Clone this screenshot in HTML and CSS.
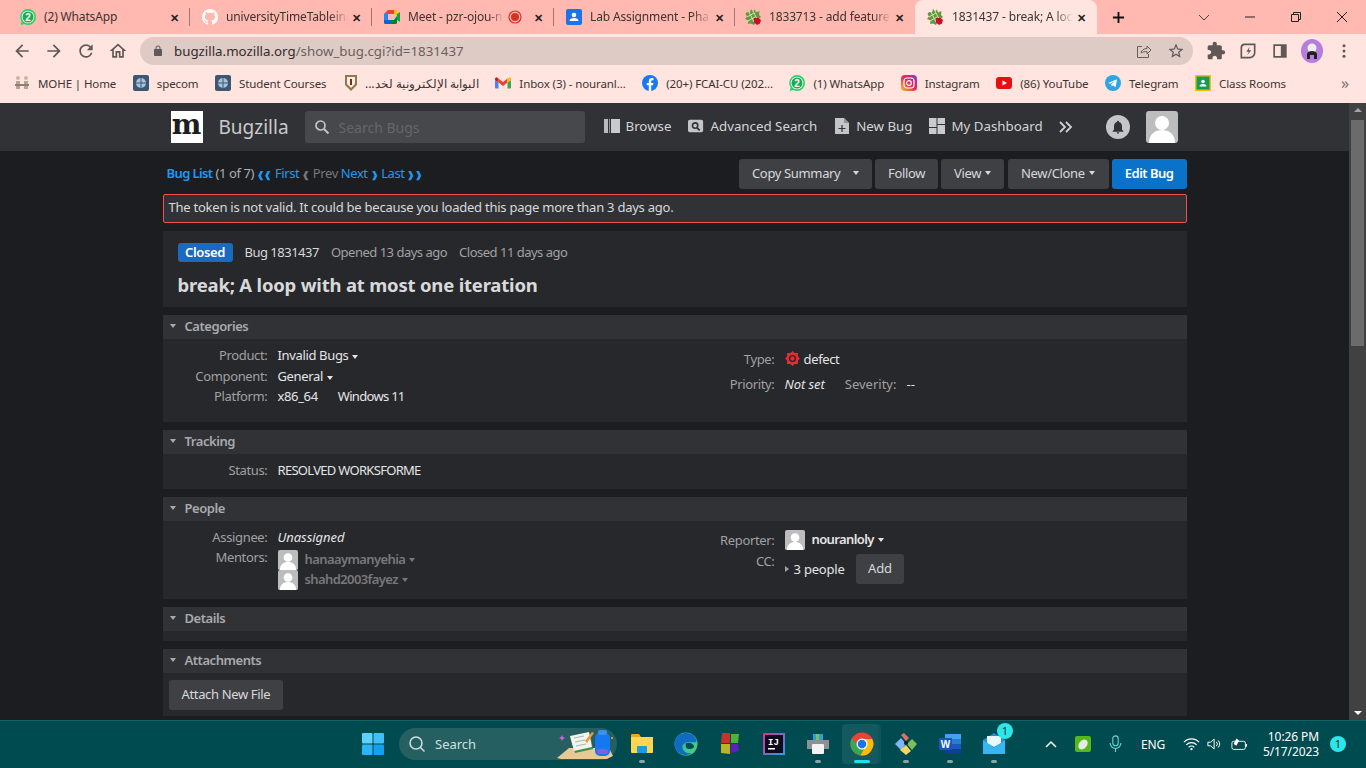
FILE: index.html
```html
<!DOCTYPE html>
<html lang="en">
<head>
    <meta charset="UTF-8">
    <meta name="viewport" content="width=device-width, initial-scale=1.0">
    <title>1831437 - break; A loop with at most one iteration</title>
    <link rel="stylesheet" href="styles.css">
</head>
<body>
    <svg class="defs" width="0" height="0">
        <symbol id="i-wa" viewBox="0 0 16 16">
            <path fill="#25d366" d="M8 0a8 8 0 0 1 0 16 8 8 0 0 1-3.600-.9L.6 16l1-3.600A8 8 0 0 1 8 0z"/>
            <circle cx="8" cy="8" r="6.300" fill="#fff"/>
            <circle cx="8" cy="8" r="5.500" fill="#1fa855"/>
        </symbol>
        <symbol id="i-bug" viewBox="0 0 16 16">
            <path fill="#5f9a3c" d="M2 3l3 .5L6 0l2 2.500L10 .5l1 3L14.500 2 14 6l2 2-2.500 2 .5 3-3.500.5-1.500 2.500-3-1.500-3 .5.500-3.500L0 10l2-2.500L.5 5z"/>
            <path stroke="#cfe2b4" stroke-width="1" d="M4 3l5 10M8 2l4 8M2 8l7-4M3 12l7-4"/>
            <path fill="#c8102e" d="M9 9h4.500l2.500 2-1 3.500-3 1.500-3-2.500z"/>
        </symbol>
        <symbol id="i-avatar" viewBox="0 0 32 32">
            <rect width="32" height="32" rx="3" fill="#bdbdbd"/>
            <circle cx="16" cy="12" r="7" fill="#fff"/>
            <path fill="#fff" d="M3 32c0-9 6-13 13-13s13 4 13 13z"/>
        </symbol>
        <symbol id="i-win" viewBox="0 0 24 24">
            <rect x="1" y="1" width="10.500" height="10.500" rx="1" fill="#5fd0ff"/>
            <rect x="12.500" y="1" width="10.500" height="10.500" rx="1" fill="#3fc0fb"/>
            <rect x="1" y="12.500" width="10.500" height="10.500" rx="1" fill="#2eb3f7"/>
            <rect x="12.500" y="12.500" width="10.500" height="10.500" rx="1" fill="#14a0f0"/>
        </symbol>
    </svg>

    <div class="tabstrip">
        <div class="tab">
            <svg class="favicon" viewBox="0 0 16 16"><use href="#i-wa"/><text class="wa-text" x="8" y="11.500">2</text></svg>
            <span class="tab-title tab-title-plain">(2) WhatsApp</span>
            <span class="tab-close">✕</span>
        </div>
        <div class="tab">
            <svg class="favicon" viewBox="0 0 16 16"><path fill="#fff" d="M8 0C3.580 0 0 3.580 0 8c0 3.540 2.290 6.530 5.470 7.590.4.07.55-.17.55-.38 0-.19-.01-.82-.01-1.490-2.010.37-2.530-.49-2.690-.94-.09-.23-.48-.94-.82-1.130-.28-.15-.68-.52-.01-.53.63-.01 1.080.58 1.230.82.72 1.210 1.870.87 2.330.66.07-.52.28-.87.51-1.070-1.780-.2-3.640-.89-3.640-3.950 0-.87.31-1.590.82-2.150-.08-.2-.36-1.020.08-2.120 0 0 .67-.21 2.200.82.64-.18 1.320-.27 2-.27.68 0 1.360.09 2 .27 1.530-1.040 2.200-.82 2.200-.82.44 1.100.16 1.920.08 2.120.51.56.82 1.270.82 2.150 0 3.070-1.870 3.750-3.650 3.950.29.25.54.73.54 1.480 0 1.070-.01 1.930-.01 2.200 0 .21.15.46.55.38A8.013 8.013 0 0016 8c0-4.420-3.580-8-8-8z"/></svg>
            <span class="tab-title">universityTimeTableing</span>
            <span class="tab-close">✕</span>
        </div>
        <div class="tab">
            <svg class="favicon" viewBox="0 0 16 16">
                <path fill="#ea4335" d="M4 1h6v4H0z"/>
                <path fill="#fbbc04" d="M10 1h1.500A1.500 1.500 0 0 1 13 2.500V7l-3-2z"/>
                <path fill="#00832d" d="M13 7v6.500a1.500 1.500 0 0 1-1.500 1.500H7v-4h3z"/>
                <path fill="#2684fc" d="M0 5h4v6H0z"/>
                <path fill="#0066da" d="M0 11h7v4H1.500A1.500 1.500 0 0 1 0 13.500z"/>
                <path fill="#00ac47" d="M13 5l3-2v10l-3-2z"/>
            </svg>
            <span class="tab-title">Meet - pzr-ojou-n</span>
            <svg class="rec" viewBox="0 0 14 14"><circle cx="7" cy="7" r="6" fill="none" stroke="#d93025" stroke-width="1.200"/><circle cx="7" cy="7" r="4" fill="#d93025"/></svg>
            <span class="tab-close">✕</span>
        </div>
        <div class="tab tab-4">
            <svg class="favicon" viewBox="0 0 16 16">
                <rect width="16" height="16" rx="2" fill="#1a73e8"/>
                <circle cx="8" cy="6" r="2.300" fill="#fff"/>
                <path fill="#fff" d="M3.500 12c0-2.200 2-3 4.500-3s4.500.8 4.500 3z"/>
            </svg>
            <span class="tab-title">Lab Assignment - Pha</span>
            <span class="tab-close">✕</span>
        </div>
        <div class="tab tab-last">
            <svg class="favicon" viewBox="0 0 16 16"><use href="#i-bug"/></svg>
            <span class="tab-title">1833713 - add feature</span>
            <span class="tab-close">✕</span>
        </div>
        <div class="tab tab-active">
            <svg class="favicon favicon-wide" viewBox="0 0 16 16"><use href="#i-bug"/></svg>
            <span class="tab-title">1831437 - break; A loc</span>
            <span class="tab-close">✕</span>
        </div>
        <svg class="tab-new" viewBox="0 0 14 14"><path d="M7 1v12M1 7h12" stroke="#111" stroke-width="2"/></svg>
        <div class="window-controls">
            <svg viewBox="0 0 12 12"><path d="M1 4l5 5 5-5" fill="none" stroke="#444" stroke-width="1"/></svg>
            <svg viewBox="0 0 12 12"><path d="M1 6h10" stroke="#222" stroke-width="1"/></svg>
            <svg viewBox="0 0 12 12"><path d="M1.500 3.500h7v7h-7zM3.500 3.500v-2h7v7h-2" fill="none" stroke="#222" stroke-width="1"/></svg>
            <svg viewBox="0 0 12 12"><path d="M1 1l10 10M11 1L1 11" stroke="#222" stroke-width="1"/></svg>
        </div>
    </div>

    <div class="toolbar">
        <svg class="tool" viewBox="0 0 24 24"><path d="M20 11H7.830l5.590-5.590L12 4l-8 8 8 8 1.410-1.410L7.830 13H20v-2z"/></svg>
        <svg class="tool" viewBox="0 0 24 24"><path d="M4 11h12.170l-5.590-5.590L12 4l8 8-8 8-1.410-1.410L16.170 13H4v-2z"/></svg>
        <svg class="tool" viewBox="0 0 24 24"><path d="M17.650 6.350A7.958 7.958 0 0012 4c-4.420 0-7.990 3.580-7.990 8s3.570 8 7.990 8c3.730 0 6.840-2.550 7.730-6h-2.080A5.990 5.990 0 0112 18c-3.310 0-6-2.690-6-6s2.690-6 6-6c1.660 0 3.140.69 4.220 1.780L13 11h7V4l-2.350 2.350z"/></svg>
        <svg class="tool" viewBox="0 0 24 24"><path d="M12 5.690l5 4.500V18h-2v-6H9v6H7v-7.810l5-4.500M12 3L2 12h3v8h6v-6h2v6h6v-8h3L12 3z"/></svg>
        <div class="omnibox">
            <svg class="omni-lock" viewBox="0 0 24 24"><path d="M18 8h-1V6c0-2.760-2.240-5-5-5S7 3.240 7 6v2H6c-1.100 0-2 .9-2 2v10c0 1.100.9 2 2 2h12c1.100 0 2-.9 2-2V10c0-1.100-.9-2-2-2zM9 6c0-1.660 1.340-3 3-3s3 1.340 3 3v2H9V6z"/></svg>
            <span class="omni-url"><span class="omni-host">bugzilla.mozilla.org</span>/show_bug.cgi?id=1831437</span>
            <svg class="omni-share" viewBox="0 0 16 16"><path d="M6 3.500H1.500v11h11V11M5 10c.5-3 3-4.500 6-4.500V3l4 4-4 4V8.500c-2.500 0-4.500.5-6 1.500z" fill="none" stroke="#6b5f5c" stroke-width="1"/></svg>
            <svg class="omni-star" viewBox="0 0 24 24"><path d="M22 9.240l-7.190-.62L12 2 9.190 8.630 2 9.240l5.460 4.730L5.820 21 12 17.270 18.180 21l-1.630-7.030L22 9.240zM12 15.400l-3.760 2.270 1-4.280-3.320-2.880 4.380-.38L12 6.100l1.710 4.040 4.380.38-3.320 2.880 1 4.280L12 15.400z"/></svg>
        </div>
        <svg class="tool tool-ext" viewBox="0 0 24 24"><path d="M20.500 11H19V7c0-1.100-.9-2-2-2h-4V3.500C13 2.120 11.880 1 10.500 1S8 2.120 8 3.500V5H4c-1.100 0-1.990.9-1.990 2v3.800H3.500c1.490 0 2.700 1.210 2.700 2.700s-1.210 2.700-2.700 2.700H2V20c0 1.100.9 2 2 2h3.800v-1.500c0-1.490 1.210-2.700 2.700-2.700 1.490 0 2.700 1.210 2.700 2.700V22H17c1.100 0 2-.9 2-2v-4h1.500c1.380 0 2.500-1.120 2.500-2.500S21.880 11 20.500 11z"/></svg>
        <svg class="tool tool-ext" viewBox="0 0 24 24"><path d="M7 4h13v10a6 6 0 0 1-6 6H4V8a4 4 0 0 1 3-4z" fill="none" stroke="#5f5856" stroke-width="2"/><path d="M14 7l-4 6h3l-2 4 5-6h-3z"/></svg>
        <svg class="tool tool-ext" viewBox="0 0 24 24"><path d="M4 4h16v16H4zM6 6v12h7V6z" fill-rule="evenodd"/></svg>
        <svg class="profile" viewBox="0 0 22 24">
            <ellipse cx="11" cy="12" rx="11" ry="12" fill="#b57edc"/>
            <circle cx="11" cy="9" r="4.500" fill="#eee"/>
            <path fill="#222" d="M6 20v-5a5 3 0 0 1 10 0v5h-3v-4H9v4z"/>
        </svg>
        <svg class="tool tool-dots" viewBox="0 0 24 24"><circle cx="12" cy="5" r="2"/><circle cx="12" cy="12" r="2"/><circle cx="12" cy="19" r="2"/></svg>
    </div>

    <div class="bookmarks">
        <div class="bookmark">
            <svg class="bm-icon" viewBox="0 0 16 16"><path fill="#b9a38f" d="M2 6h4v8H2zM10 6h4v8h-4z"/><circle cx="4" cy="3" r="2" fill="#c9b7a6"/><circle cx="12" cy="3" r="2" fill="#c9b7a6"/><path fill="#8e7f73" d="M1 9h14v2H1z"/></svg>
            <span>MOHE | Home</span>
        </div>
        <div class="bookmark">
            <svg class="bm-icon" viewBox="0 0 16 16"><rect width="16" height="16" rx="2" fill="#3e5770"/><circle cx="8" cy="8" r="5" fill="#a8c3dc"/><path d="M8 3v10M3 8h10" stroke="#3e5770"/></svg>
            <span>specom</span>
        </div>
        <div class="bookmark">
            <svg class="bm-icon" viewBox="0 0 16 16"><rect width="16" height="16" rx="2" fill="#3e5770"/><circle cx="8" cy="8" r="5" fill="#a8c3dc"/><path d="M8 3v10M3 8h10" stroke="#3e5770"/></svg>
            <span>Student Courses</span>
        </div>
        <div class="bookmark bookmark-ar">
            <svg class="bm-icon" viewBox="0 0 16 16"><path fill="#8f7a4c" d="M2 0h12v10l-6 6-6-6z"/><path fill="#f4efe2" d="M4 2h8v7l-4 4-4-4z"/><path fill="#7a2b22" d="M7 4h2v6H7z"/></svg>
            <span lang="ar" dir="rtl">البوابة الإلكترونية لخد...</span>
        </div>
        <div class="bookmark">
            <svg class="bm-icon" viewBox="0 0 16 16"><path fill="#4285f4" d="M1 13.500h2.500V7.500L0 5v7.500a1 1 0 0 0 1 1z"/><path fill="#34a853" d="M12.500 13.500H15a1 1 0 0 0 1-1V5l-3.500 2.500z"/><path fill="#ea4335" d="M3.500 7.500V3.500L8 7l4.500-3.500v4L8 11z"/><path fill="#c5221f" d="M0 3.500V5l3.500 2.500v-4L2.500 2.700A1.600 1.600 0 0 0 0 3.500z"/><path fill="#fbbc04" d="M12.500 3.500v4L16 5V3.500a1.600 1.600 0 0 0-2.500-.8z"/></svg>
            <span>Inbox (3) - nouranl...</span>
        </div>
        <div class="bookmark">
            <svg class="bm-icon" viewBox="0 0 16 16"><circle cx="8" cy="8" r="8" fill="#1877f2"/><path fill="#fff" d="M11 10.300l.4-2.300H9.200V6.500c0-.6.3-1.200 1.300-1.200h1V3.300s-.9-.2-1.800-.2C7.900 3.100 6.800 4.300 6.800 6.300V8h-2v2.300h2V16h2.400v-5.700z"/></svg>
            <span>(20+) FCAI-CU (202...</span>
        </div>
        <div class="bookmark">
            <svg class="bm-icon" viewBox="0 0 16 16"><use href="#i-wa"/><text class="wa-text" x="8" y="11.500">2</text></svg>
            <span>(1) WhatsApp</span>
        </div>
        <div class="bookmark">
            <svg class="bm-icon" viewBox="0 0 16 16">
                <defs><linearGradient id="ig" x1="0" y1="1" x2="1" y2="0"><stop offset="0" stop-color="#fdc12f"/><stop offset=".5" stop-color="#e8264f"/><stop offset="1" stop-color="#8a35d0"/></linearGradient></defs>
                <rect width="16" height="16" rx="4" fill="url(#ig)"/>
                <rect x="3" y="3" width="10" height="10" rx="3" fill="none" stroke="#fff" stroke-width="1.200"/>
                <circle cx="8" cy="8" r="2.300" fill="none" stroke="#fff" stroke-width="1.200"/>
            </svg>
            <span>Instagram</span>
        </div>
        <div class="bookmark">
            <svg class="bm-icon" viewBox="0 0 16 16"><rect y="2" width="16" height="12" rx="3" fill="#e61010"/><path fill="#fff" d="M6.500 5.500L11 8l-4.500 2.500z"/></svg>
            <span>(86) YouTube</span>
        </div>
        <div class="bookmark">
            <svg class="bm-icon" viewBox="0 0 16 16"><circle cx="8" cy="8" r="8" fill="#2ca5e0"/><path fill="#fff" d="M3 8l9-3.700-1.400 8-2.700-2-1.300 1.300-.3-2.300 4-3.500-5 3z"/></svg>
            <span>Telegram</span>
        </div>
        <div class="bookmark">
            <svg class="bm-icon" viewBox="0 0 16 16"><rect width="16" height="16" rx="1" fill="#fbbc04"/><rect x="1.500" y="1.500" width="13" height="13" fill="#0f9d58"/><circle cx="8" cy="6.500" r="1.800" fill="#fff"/><path fill="#fff" d="M4.500 11.500c0-1.800 1.600-2.500 3.500-2.500s3.500.7 3.500 2.500z"/></svg>
            <span>Class Rooms</span>
        </div>
        <span class="bm-more">»</span>
    </div>

    <div class="viewport">
        <div class="page">
            <header class="bz-header">
                <div class="bz-header-inner">
                    <div class="bz-logo">m</div>
                    <div class="bz-name">Bugzilla</div>
                    <div class="bz-search">
                        <svg viewBox="0 0 16 16"><circle cx="6.500" cy="6.500" r="4.500" fill="none" stroke="#c4c4c4" stroke-width="1.700"/><path d="M10 10l4.500 4.500" stroke="#c4c4c4" stroke-width="2"/></svg>
                        <span>Search Bugs</span>
                    </div>
                    <nav class="bz-nav">
                        <div class="bz-nav-item">
                            <svg viewBox="0 0 16 16"><path fill="#b9bbbe" d="M0 1h4v14H0z"/><path fill="#8f9194" d="M5 1h1v14H5z"/><path fill="#c9cacc" d="M7 1h9v14H7z"/></svg>
                            <span>Browse</span>
                        </div>
                        <div class="bz-nav-item">
                            <svg viewBox="0 0 18 16"><rect y="1" width="17" height="14" rx="2" fill="#c4c5c7"/><circle cx="8" cy="7.500" r="3" fill="none" stroke="#313236" stroke-width="1.800"/><path d="M10.200 10l3 3" stroke="#313236" stroke-width="2"/></svg>
                            <span>Advanced Search</span>
                        </div>
                        <div class="bz-nav-item">
                            <svg viewBox="0 0 14 16"><path fill="#c4c5c7" d="M0 0h9l5 5v11H0z"/><path fill="#8f9194" d="M9 0l5 5H9z"/><path d="M7 7v7M3.500 10.500h7" stroke="#313236" stroke-width="1.200"/></svg>
                            <span>New Bug</span>
                        </div>
                        <div class="bz-nav-item">
                            <svg viewBox="0 0 16 16"><path fill="#c9cacc" d="M0 0h7.500v9H0zM8.500 0H16v6H8.500zM0 10h7.500v6H0zM8.500 7H16v9H8.500z"/></svg>
                            <span>My Dashboard</span>
                        </div>
                    </nav>
                    <svg class="bz-more" viewBox="0 0 14 12"><path d="M1 1l5 5-5 5M7 1l5 5-5 5" fill="none" stroke="#cfd0d2" stroke-width="1.800"/></svg>
                    <div class="bz-bell">
                        <svg viewBox="0 0 24 24"><path d="M12 22c1.100 0 2-.9 2-2h-4c0 1.100.89 2 2 2zm6-6v-5c0-3.070-1.640-5.640-4.500-6.320V4c0-.83-.67-1.500-1.500-1.500s-1.500.67-1.500 1.500v.68C7.630 5.360 6 7.920 6 11v5l-2 2v1h16v-1l-2-2z"/></svg>
                    </div>
                    <svg class="bz-user" viewBox="0 0 32 32"><use href="#i-avatar"/></svg>
                </div>
            </header>

            <main class="bz-main">
                <div class="nav-row">
                    <div class="bug-nav">
                        <a class="bug-list">Bug List</a> (1 of 7)
                        <a><b class="arrows">❰❰</b> First</a>
                        <span class="muted"><b class="arrows">❰</b> Prev</span>
                        <a>Next <b class="arrows">❱</b></a>
                        <a>Last <b class="arrows">❱❱</b></a>
                    </div>
                    <div class="actions">
                        <div class="btn btn-split"><span>Copy Summary</span><i class="caret"></i></div>
                        <div class="btn">Follow</div>
                        <div class="btn">View <i class="caret"></i></div>
                        <div class="btn btn-clone">New/Clone <i class="caret"></i></div>
                        <div class="btn btn-primary">Edit Bug</div>
                    </div>
                </div>

                <div class="error-box">The token is not valid. It could be because you loaded this page more than 3 days ago.</div>

                <section class="summary">
                    <div class="summary-meta">
                        <span class="badge">Closed</span>
                        <span class="bug-id">Bug 1831437</span>
                        <span class="dates">Opened 13 days ago</span>
                        <span class="dates">Closed 11 days ago</span>
                    </div>
                    <h1>break; A loop with at most one iteration</h1>
                </section>

                <section class="module">
                    <h2><i class="caret"></i><span>Categories</span></h2>
                    <div class="module-body cols body-categories">
                        <div>
                            <div class="field"><span class="label">Product:</span><span class="value">Invalid Bugs <i class="caret"></i></span></div>
                            <div class="field"><span class="label">Component:</span><span class="value">General <i class="caret"></i></span></div>
                            <div class="field"><span class="label">Platform:</span><span class="value">x86_64 <span class="os">Windows 11</span></span></div>
                        </div>
                        <div class="col-right">
                            <div class="field field-type">
                                <span class="label">Type:</span>
                                <span class="value value-icon">
                                    <svg class="defect" viewBox="0 0 16 16"><path fill="#ea2a33" d="M8 0l2.200 2.200h3.600v3.600L16 8l-2.200 2.200v3.600h-3.600L8 16l-2.200-2.200H2.200v-3.600L0 8l2.200-2.200V2.200h3.600z"/><circle cx="8" cy="8" r="3.800" fill="#27282b"/><circle cx="8" cy="8" r="2.300" fill="#ea2a33"/></svg>
                                    defect
                                </span>
                            </div>
                            <div class="field field-priority">
                                <span class="label">Priority:</span><span class="value"><em>Not set</em></span>
                                <span class="label label-inline">Severity:</span><span class="value value-plain">--</span>
                            </div>
                        </div>
                    </div>
                </section>

                <section class="module">
                    <h2><i class="caret"></i><span>Tracking</span></h2>
                    <div class="module-body body-tracking">
                        <div class="field"><span class="label">Status:</span><span class="value value-caps">RESOLVED WORKSFORME</span></div>
                    </div>
                </section>

                <section class="module">
                    <h2><i class="caret"></i><span>People</span></h2>
                    <div class="module-body cols body-people">
                        <div>
                            <div class="field"><span class="label">Assignee:</span><span class="value"><em>Unassigned</em></span></div>
                            <div class="field field-mentors">
                                <span class="label">Mentors:</span>
                                <div class="people">
                                    <div class="person person-dim"><svg viewBox="0 0 32 32"><use href="#i-avatar"/></svg><b>hanaaymanyehia</b><i class="caret"></i></div>
                                    <div class="person person-dim"><svg viewBox="0 0 32 32"><use href="#i-avatar"/></svg><b>shahd2003fayez</b><i class="caret"></i></div>
                                </div>
                            </div>
                        </div>
                        <div class="col-right">
                            <div class="field field-reporter">
                                <span class="label">Reporter:</span>
                                <div class="person"><svg viewBox="0 0 32 32"><use href="#i-avatar"/></svg><b>nouranloly</b><i class="caret"></i></div>
                            </div>
                            <div class="field field-cc">
                                <span class="label">CC:</span>
                                <div class="cc-value"><i class="caret-right"></i>3 people<div class="btn">Add</div></div>
                            </div>
                        </div>
                    </div>
                </section>

                <section class="module">
                    <h2><i class="caret"></i><span>Details</span></h2>
                    <div class="module-body body-details"></div>
                </section>

                <section class="module">
                    <h2><i class="caret"></i><span>Attachments</span></h2>
                    <div class="module-body body-attach"><div class="btn">Attach New File</div></div>
                </section>
            </main>
        </div>
        <div class="scrollbar">
            <i class="sb-up"></i>
            <div class="sb-thumb"></div>
            <i class="sb-down"></i>
        </div>
    </div>

    <footer class="taskbar">
        <div class="task-item"><svg viewBox="0 0 24 24"><use href="#i-win"/></svg></div>
        <div class="task-search">
            <svg class="task-search-icon" viewBox="0 0 18 18"><circle cx="8" cy="8" r="6" fill="none" stroke="#cfe0df" stroke-width="1.500"/><path d="M12.500 12.500l4 4" stroke="#cfe0df" stroke-width="1.500"/></svg>
            <span>Search</span>
            <svg class="task-search-art" viewBox="0 0 56 30">
                <path fill="#e9c891" d="M0 29l12-10h40l4 8-6 3H4z"/>
                <path fill="#3f8f4a" d="M13 8l20-4 3 16-18 4z"/>
                <path fill="#f2f4ee" d="M13 7l19-4 3 15-18 4z"/>
                <path d="M17 9l10-2M18 13l10-2M19 17l10-2" stroke="#a9b7ae"/>
                <path fill="#f39a2e" d="M28 12l7-9 2 1-7 10z"/>
                <rect x="38" y="4" width="15" height="23" rx="5" fill="#1478f0"/>
                <rect x="41" y="1" width="9" height="5" rx="2" fill="#3a8ff0"/>
                <rect x="40" y="20" width="11" height="5" rx="2" fill="#8a5be0"/>
                <path fill="#d65fe0" d="M5 6l1 2 2 1-2 1-1 2-1-2-2-1 2-1z"/>
                <circle cx="55" cy="9" r="1" fill="#f3b22e"/>
            </svg>
        </div>
        <div class="task-item">
            <svg viewBox="0 0 24 24"><path fill="#e8a81e" d="M1 3a1 1 0 0 1 1-1h7l2 3h-10z"/><path fill="#ffd64f" d="M1 5h22v15a1 1 0 0 1-1 1H2a1 1 0 0 1-1-1z"/><rect x="7" y="14" width="10" height="7" rx="1" fill="#1f9ae0"/></svg>
            <i class="dot"></i>
        </div>
        <div class="task-item">
            <svg viewBox="0 0 24 24"><defs><linearGradient id="edge" x1="0" y1="0" x2="1" y2="1"><stop offset="0" stop-color="#1fa9e0"/><stop offset="1" stop-color="#4fd66a"/></linearGradient></defs><circle cx="12" cy="12" r="11.500" fill="url(#edge)"/><path fill="#0f6cc0" d="M12 1C5 1 .5 6 .5 12c0 6 5 11 11 11 3 0 5-1 6-2-5 1-9-2-9-6 0-3 3-5 6-5s8 1 8-1C22 5 18 1 12 1z"/><path fill="#004b4f" d="M12 11c3-1 7 0 8 3 .5 2-2 3-5 3-3 0-4-3-3-6z"/></svg>
        </div>
        <div class="task-item">
            <svg viewBox="0 0 24 24"><path fill="#c8322a" d="M4 1h8v10H3z"/><path fill="#4fb33a" d="M13 2h8l-1 9h-7z"/><path fill="#b9b22c" d="M3 12h9v10l-9-1z"/><path fill="#5a22b8" d="M13 12h7l1 7-8 2z"/></svg>
        </div>
        <div class="task-item">
            <svg viewBox="0 0 24 24"><defs><linearGradient id="ij" x1="0" y1="0" x2="1" y2="1"><stop offset="0" stop-color="#e0308a"/><stop offset="1" stop-color="#2b9fe6"/></linearGradient></defs><rect x="1" y="1" width="22" height="22" fill="url(#ij)"/><rect x="3" y="3" width="18" height="18" fill="#100b1c"/><text class="ij-text" x="6" y="13">IJ</text><rect x="6" y="16" width="7" height="1.500" fill="#fff"/></svg>
        </div>
        <div class="task-item">
            <svg viewBox="0 0 24 24"><path fill="#2f9fdc" d="M7 2h10v6H7z"/><path fill="#7fc34a" d="M10 2h3v6h-3z"/><path fill="#8a9296" d="M1 8h22v9H1z"/><rect x="6" y="12" width="12" height="10" rx="1" fill="#f3f3f3"/></svg>
            <i class="dot"></i>
        </div>
        <div class="task-item task-item-active">
            <svg viewBox="0 0 24 24"><circle cx="12" cy="12" r="11.500" fill="#ea4335"/><path fill="#34a853" d="M2 6a11.500 11.500 0 0 0 8.500 17.400L15 16H9z"/><path fill="#fbbc04" d="M12 7h10.200a11.500 11.500 0 0 1-11.700 16.400L16 13z"/><circle cx="12" cy="12" r="5.500" fill="#fff"/><circle cx="12" cy="12" r="4.300" fill="#1a73e8"/></svg>
            <i class="dot dot-active"></i>
        </div>
        <div class="task-item">
            <svg viewBox="0 0 24 24"><path fill="#7fb6f5" d="M1 12l6-6 5 6-5 6z"/><path fill="#e86c6c" d="M7 3l3-2 5 5-3 3z"/><path fill="#7cbe5a" d="M13 12l5-5 5 5-5 6z"/><path fill="#f3d65f" d="M6 18l6-5 5 6-5 4z"/><circle cx="12" cy="11" r="2" fill="#1b1b1b"/></svg>
            <i class="dot"></i>
        </div>
        <div class="task-item">
            <svg viewBox="0 0 24 24"><path fill="#2b7cd3" d="M7 2h16v20H7z"/><path fill="#41a5ee" d="M7 2h16v5H7z"/><path fill="#185abd" d="M7 12h16v5H7z"/><path fill="#103f91" d="M7 17h16v5H7z"/><rect x="1" y="6" width="13" height="12" rx="1" fill="#1657b5"/><text class="word-text" x="2.800" y="15.800">W</text></svg>
            <i class="dot"></i>
        </div>
        <div class="task-item">
            <svg viewBox="0 0 24 24"><path fill="#1e90e0" d="M1 8l11-7 11 7v14H1z"/><path fill="#e8f7ff" d="M5 4h14v7l-7 4-7-4z"/><path fill="#38b6f2" d="M1 8l11 8 11-8v14H1z"/></svg>
            <span class="task-badge">1</span>
            <i class="dot"></i>
        </div>
        <div class="tray">
            <svg class="tray-chevron" viewBox="0 0 12 8"><path d="M1 7l5-5 5 5" fill="none" stroke="#fff" stroke-width="1.500"/></svg>
            <svg class="tray-app" viewBox="0 0 16 16"><rect width="16" height="16" rx="2" fill="#52b81c"/><ellipse cx="8" cy="8.500" rx="4" ry="5.500" transform="rotate(40 8 8.500)" fill="#e6eae2"/></svg>
            <svg class="tray-mic" viewBox="0 0 14 20"><rect x="4" y="1" width="6" height="11" rx="3" fill="none" stroke="#6fd6d6" stroke-width="1.200"/><path d="M1 9a6 6 0 0 0 12 0M7 15v4" fill="none" stroke="#6fd6d6" stroke-width="1.200"/></svg>
            <span class="tray-lang">ENG</span>
            <svg class="tray-wifi" viewBox="0 0 18 14"><path d="M1 5a11 11 0 0 1 16 0M3.500 8a7.500 7.500 0 0 1 11 0M6 10.500a4 4 0 0 1 6 0" fill="none" stroke="#fff" stroke-width="1.200"/><circle cx="9" cy="12.500" r="1.200" fill="#fff"/></svg>
            <svg class="tray-vol" viewBox="0 0 18 14"><path d="M1 5h3l4-3.500v11L4 9H1z" fill="none" stroke="#fff" stroke-width="1.100"/><path d="M10.500 4.500a3.500 3.500 0 0 1 0 5M12.500 3a6 6 0 0 1 0 8" fill="none" stroke="#fff" stroke-width="1.100"/></svg>
            <svg class="tray-bat" viewBox="0 0 20 14"><rect x="1" y="4" width="15" height="9" rx="2" fill="none" stroke="#fff"/><path d="M17 7v3" stroke="#fff" stroke-width="1.500"/><path fill="#fff" d="M3 7l3-6 3 2-3 6z"/></svg>
            <div class="clock"><div>10:26 PM</div><div>5/17/2023</div></div>
            <span class="tray-badge">1</span>
        </div>
    </footer>
</body>
</html>
```

FILE: styles.css
```css
* {
    box-sizing: border-box;
}
html, body {
    margin: 0;
    padding: 0;
    width: 1366px;
    height: 768px;
    overflow: hidden;
}
body {
    display: flex;
    flex-direction: column;
    font-family: "Noto Sans", "Liberation Sans", sans-serif;
    background-color: #1c1d20;
}
.defs {
    position: absolute;
}
svg {
    display: block;
    flex: none;
}
.wa-text {
    font-family: "Liberation Sans", sans-serif;
    font-size: 10px;
    font-weight: 700;
    letter-spacing: 0;
    text-anchor: middle;
    fill: #fff;
}

/* browser tabs */
.tabstrip {
    display: flex;
    align-items: center;
    flex: none;
    height: 34px;
    padding-left: 8px;
    background-color: #ffb9b0;
    font-size: 12px;
    letter-spacing: -0.15px;
    color: #3c3432;
}
.tab {
    display: flex;
    align-items: center;
    flex: none;
    width: 182px;
    height: 34px;
    padding: 0 8px 0 12px;
    position: relative;
}
.tab-4 {
    width: 181px;
}
.tab-last {
    width: 180px;
    padding-left: 10px;
}
.tab::after {
    content: "";
    position: absolute;
    right: 0;
    top: 8px;
    height: 18px;
    width: 1px;
    background-color: #9c7a74;
}
.tab-last::after,
.tab-active::after {
    display: none;
}
.tab-active {
    background-color: #ffe4df;
    border-radius: 8px 8px 0 0;
}
.favicon {
    width: 16px;
    height: 16px;
    margin-right: 8px;
}
.favicon-wide {
    margin-right: 9px;
}
.tab-title {
    flex: 1;
    min-width: 0;
    padding-bottom: 1px;
    white-space: nowrap;
    -webkit-mask-image: linear-gradient(to right, #000 85%, transparent);
    mask-image: linear-gradient(to right, #000 85%, transparent);
}
.tab-title-plain {
    -webkit-mask-image: none;
    mask-image: none;
}
.rec {
    width: 14px;
    height: 14px;
    margin: 0 8px 0 4px;
}
.tab-close {
    width: 16px;
    text-align: center;
    font-size: 11px;
    font-weight: 700;
    color: #222;
}
.tab-new {
    width: 13px;
    height: 13px;
    margin-left: 15px;
}
.window-controls {
    display: flex;
    margin-left: auto;
    padding-right: 18px;
    gap: 34px;
}
.window-controls svg {
    width: 12px;
    height: 12px;
}

/* address bar */
.toolbar {
    display: flex;
    align-items: center;
    flex: none;
    height: 34px;
    padding-left: 12px;
    background-color: #ffe4df;
}
.tool {
    width: 20px;
    height: 20px;
    margin-right: 12px;
    fill: #5f5856;
}
.omnibox {
    display: flex;
    align-items: center;
    flex: none;
    width: 1053px;
    height: 28px;
    margin-right: 13px;
    padding: 0 8px 0 12px;
    border-radius: 14px;
    background-color: #decbc6;
    font-size: 13.300px;
    color: #6b5f5c;
}
.omni-lock {
    width: 12px;
    height: 12px;
    margin-right: 10px;
    fill: #5f5856;
}
.omni-host {
    color: #332c2a;
}
.omni-url {
    flex: 1;
}
.omni-share {
    width: 16px;
    height: 16px;
    margin-right: 15px;
}
.omni-star {
    width: 18px;
    height: 18px;
    fill: #5f5856;
}
.tool-ext {
    width: 20px;
    height: 20px;
}
.profile {
    width: 22px;
    height: 24px;
    margin: 0 12px 0 -1px;
}
.tool-dots {
    width: 18px;
    height: 18px;
    margin: 0;
}

/* bookmarks */
.bookmarks {
    display: flex;
    align-items: center;
    flex: none;
    height: 35px;
    padding: 0 0 5px 14px;
    gap: 16.500px;
    background-color: #ffe4df;
    font-size: 11.500px;
    letter-spacing: -0.1px;
    color: #3c3432;
    position: relative;
    white-space: nowrap;
}
.bookmark {
    display: flex;
    align-items: center;
    gap: 8px;
}
.bm-icon {
    width: 16px;
    height: 16px;
}
.bookmark-ar {
    gap: 6px;
    font-size: 12px;
    letter-spacing: 0;
}
.bm-more {
    position: absolute;
    right: 17px;
    font-size: 16px;
    color: #7a6f6c;
}

/* page */
.viewport {
    display: flex;
    flex: none;
    height: 617px;
    overflow: hidden;
}
.page {
    flex: 1;
    font-size: 13px;
    letter-spacing: -0.35px;
    color: #d8d9db;
}
.bz-header {
    height: 48px;
    background-color: #313236;
}
.bz-header-inner {
    display: flex;
    align-items: center;
    width: 1024px;
    height: 48px;
    margin: 0 auto;
    padding-left: 8px;
}
.bz-logo {
    width: 32px;
    height: 32px;
    background-color: #fff;
    color: #1c1d20;
    font-family: "DejaVu Serif", serif;
    font-weight: 700;
    font-size: 28px;
    line-height: 27px;
    letter-spacing: 0;
    text-align: center;
}
.bz-name {
    width: 86px;
    margin-left: 16px;
    font-size: 19px;
    letter-spacing: 0;
    color: #c9cacc;
}
.bz-search {
    display: flex;
    align-items: center;
    gap: 9px;
    width: 280px;
    height: 32px;
    padding-left: 9px;
    border-radius: 3px;
    background-color: #47484c;
    font-size: 14px;
    letter-spacing: 0;
    color: #65666a;
}
.bz-search svg {
    width: 16px;
    height: 16px;
}
.bz-nav {
    display: flex;
    gap: 17px;
    margin: -2px 0 0 19px;
    font-size: 13.300px;
    letter-spacing: 0;
    color: #d4d5d7;
}
.bz-nav-item {
    display: flex;
    align-items: center;
    gap: 6px;
}
.bz-nav-item svg {
    width: 16px;
    height: 16px;
}
.bz-more {
    width: 14px;
    height: 12px;
    margin-left: 16px;
}
.bz-bell {
    display: flex;
    align-items: center;
    justify-content: center;
    width: 24px;
    height: 24px;
    margin-left: 33px;
    border-radius: 50%;
    background-color: #c4c5c7;
}
.bz-bell svg {
    width: 16px;
    height: 16px;
    fill: #313236;
}
.bz-user {
    width: 32px;
    height: 32px;
    margin-left: 16px;
}
.bz-main {
    width: 1024px;
    margin: 0 auto;
}
a {
    color: #1c9bf5;
}
.nav-row {
    display: flex;
    align-items: center;
    justify-content: space-between;
    height: 30px;
    margin-top: 8px;
    padding-left: 4px;
}
.bug-nav {
    padding-bottom: 2px;
    letter-spacing: -0.42px;
    color: #aeafb1;
}
.bug-list {
    font-weight: 600;
    letter-spacing: -0.6px;
}
.arrows {
    font-size: 9px;
}
.muted {
    color: #77787b;
}
.actions {
    display: flex;
    gap: 3px;
}
.btn {
    display: inline-flex;
    align-items: center;
    height: 30px;
    padding: 0 13px 2px;
    border-radius: 3px;
    background-color: #3f4044;
    color: #d8d9db;
    white-space: nowrap;
}
.btn .caret {
    margin-left: 4px;
}
.btn-split {
    width: 133px;
    padding-right: 13px;
    justify-content: space-between;
}
.btn-clone {
    margin-left: 1px;
    padding-right: 14px;
}
.btn-primary {
    background-color: #0a72c8;
    color: #fff;
    font-weight: 600;
    letter-spacing: -0.5px;
}
.caret {
    display: inline-block;
    width: 0;
    height: 0;
    border-left: 3px solid transparent;
    border-right: 3px solid transparent;
    border-top: 4px solid currentColor;
    vertical-align: 1px;
}
.caret-right {
    display: inline-block;
    width: 0;
    height: 0;
    margin-right: 5px;
    border-top: 3px solid transparent;
    border-bottom: 3px solid transparent;
    border-left: 4px solid #a0a1a3;
}
.error-box {
    height: 29px;
    margin-top: 5px;
    padding-left: 5px;
    line-height: 25px;
    letter-spacing: -0.24px;
    border: 1px solid #f44f4f;
    border-radius: 2px;
    background-color: #313236;
    color: #d8d9db;
}
.summary {
    height: 76px;
    margin-top: 8px;
    padding: 12px 15px 0;
    background-color: #27282b;
}
.summary-meta {
    display: flex;
    align-items: center;
    height: 19px;
}
.badge {
    width: 55px;
    height: 19px;
    margin-right: 12px;
    border-radius: 3px;
    background-color: #1a6abf;
    color: #fff;
    font-weight: 600;
    line-height: 18px;
    text-align: center;
}
.bug-id {
    margin: -2px 12px 0 0;
    letter-spacing: -0.5px;
}
.dates {
    margin: -2px 12px 0 0;
    letter-spacing: -0.5px;
    color: #a0a1a3;
}
h1 {
    margin: 10px 0 0;
    font-size: 18.500px;
    line-height: 26px;
    font-weight: 700;
    letter-spacing: -0.2px;
    color: #d8d9db;
}
.module {
    margin-top: 8px;
    background-color: #27282b;
}
.module h2 {
    display: flex;
    align-items: center;
    height: 24px;
    margin: 0;
    padding: 0 0 2px 7px;
    background-color: #313236;
    font-size: 13px;
    font-weight: 600;
    letter-spacing: -0.45px;
    color: #a9aaac;
}
.module h2 .caret {
    margin-right: 9px;
}
.module-body {
    padding-top: 6px;
}
.cols {
    display: grid;
    grid-template-columns: 512px 512px;
}
.body-categories {
    height: 83px;
}
.body-tracking {
    height: 35px;
}
.body-people {
    height: 78px;
}
.body-details {
    height: 10px;
}
.body-attach {
    height: 43px;
    padding: 7px 0 0 6px;
}
.field {
    display: flex;
    align-items: center;
    min-height: 20.500px;
}
.label {
    flex: none;
    width: 105px;
    margin-right: 10px;
    text-align: right;
    color: #a0a1a3;
}
.value {
    color: #e4e5e6;
}
.value em {
    letter-spacing: -0.05px;
}
.value-caps {
    letter-spacing: -0.7px;
}
.value-plain {
    letter-spacing: 0;
}
.value .caret {
    margin-left: 1px;
}
.os {
    margin-left: 17px;
    letter-spacing: -0.7px;
}
.col-right .label {
    width: 100px;
}
.field-type {
    height: 25px;
    margin-top: 1px;
}
.field-priority {
    height: 25px;
}
.value-icon {
    display: flex;
    align-items: center;
    gap: 4px;
}
.defect {
    width: 15px;
    height: 15px;
}
.col-right .label-inline {
    width: auto;
    margin-left: 20px;
    letter-spacing: 0;
}
.field-reporter {
    height: 20px;
    margin-top: 3px;
}
.field-mentors {
    align-items: flex-start;
    margin-top: 2.500px;
}
.field-mentors .label {
    margin-top: -2px;
}
.field-cc {
    align-items: flex-start;
    margin-top: 3px;
}
.field-cc .label {
    margin-top: -2px;
}
.cc-value {
    display: flex;
    align-items: center;
    letter-spacing: -0.2px;
    color: #e4e5e6;
}
.cc-value .btn {
    margin-left: 11px;
    padding: 0 12.500px 2px;
}
.person {
    display: flex;
    align-items: center;
    height: 20px;
    color: #e4e5e6;
}
.person svg {
    width: 20px;
    height: 20px;
    margin-right: 7px;
}
.person b {
    padding-bottom: 3px;
    font-weight: 600;
    letter-spacing: -0.6px;
}
.person .caret {
    margin-left: 4px;
}
.person-dim {
    color: #77787b;
}

/* scrollbar */
.scrollbar {
    display: flex;
    flex-direction: column;
    align-items: center;
    width: 17px;
    padding-top: 5px;
    background-color: #414141;
}
.sb-up,
.sb-down {
    width: 0;
    height: 0;
    border-left: 4px solid transparent;
    border-right: 4px solid transparent;
}
.sb-up {
    border-bottom: 4px solid #a3a3a3;
}
.sb-down {
    margin-bottom: 5px;
    border-top: 4px solid #fff;
}
.sb-thumb {
    width: 13px;
    height: 226px;
    margin: 8px 0 auto;
    background-color: #6b6b6b;
}

/* windows taskbar */
.taskbar {
    display: flex;
    align-items: center;
    flex: none;
    height: 48px;
    padding: 0 0 1px 351px;
    border-top: 1px solid #0f6265;
    background-color: #004b4f;
    color: #fff;
}
.task-item {
    display: flex;
    align-items: center;
    justify-content: center;
    flex: none;
    width: 44px;
    height: 40px;
    position: relative;
}
.task-item svg {
    width: 24px;
    height: 24px;
    position: relative;
}
.task-item-active::before {
    content: "";
    position: absolute;
    left: 2px;
    top: 0;
    width: 36px;
    height: 40px;
    border-radius: 4px;
    background-color: #13595d;
    box-shadow: 3px 0 0 #0e5458;
}
.dot {
    position: absolute;
    left: 19px;
    bottom: 1px;
    width: 6px;
    height: 3px;
    border-radius: 2px;
    background-color: #8aa5a6;
}
.dot-active {
    left: 14px;
    width: 16px;
    background-color: #1fe0f0;
}
.task-badge {
    position: absolute;
    right: 3px;
    top: -1px;
    width: 16px;
    height: 16px;
    border-radius: 50%;
    background-color: #2ee6e8;
    color: #033;
    font-size: 11px;
    line-height: 16px;
    text-align: center;
}
.ij-text {
    font-family: "Liberation Mono", monospace;
    font-size: 9px;
    font-weight: 700;
    fill: #fff;
}
.word-text {
    font-family: "Liberation Sans", sans-serif;
    font-size: 10px;
    font-weight: 700;
    fill: #fff;
}
.task-search {
    display: flex;
    align-items: center;
    flex: none;
    width: 218px;
    height: 32px;
    margin: 0 3px 0 4px;
    padding-left: 9px;
    border-radius: 16px;
    background-color: #255f61;
    font-size: 13px;
    color: #cfe0df;
    position: relative;
}
.task-search-icon {
    width: 18px;
    height: 18px;
    margin-right: 9px;
}
.task-search-art {
    position: absolute;
    right: 4px;
    bottom: 1px;
    width: 56px;
    height: 30px;
}
.tray {
    display: flex;
    align-items: center;
    margin-left: auto;
    padding-right: 20px;
    font-size: 12px;
}
.tray-chevron {
    width: 12px;
    height: 8px;
}
.tray-app {
    width: 16px;
    height: 16px;
    margin-left: 18px;
}
.tray-mic {
    width: 13px;
    height: 18px;
    margin-left: 18px;
}
.tray-lang {
    width: 26px;
    margin-left: 19px;
    letter-spacing: -0.2px;
}
.tray-wifi {
    width: 17px;
    height: 14px;
    margin-left: 16px;
}
.tray-vol {
    width: 16px;
    height: 14px;
    margin-left: 7px;
}
.tray-bat {
    width: 18px;
    height: 14px;
    margin-left: 8px;
}
.clock {
    width: 62px;
    margin-left: 8px;
    text-align: right;
    line-height: 15.500px;
    letter-spacing: -0.1px;
}
.tray-badge {
    width: 16px;
    height: 16px;
    margin-left: 11px;
    border-radius: 50%;
    background-color: #2ee6e8;
    color: #033;
    font-size: 11px;
    line-height: 16px;
    text-align: center;
}
```
